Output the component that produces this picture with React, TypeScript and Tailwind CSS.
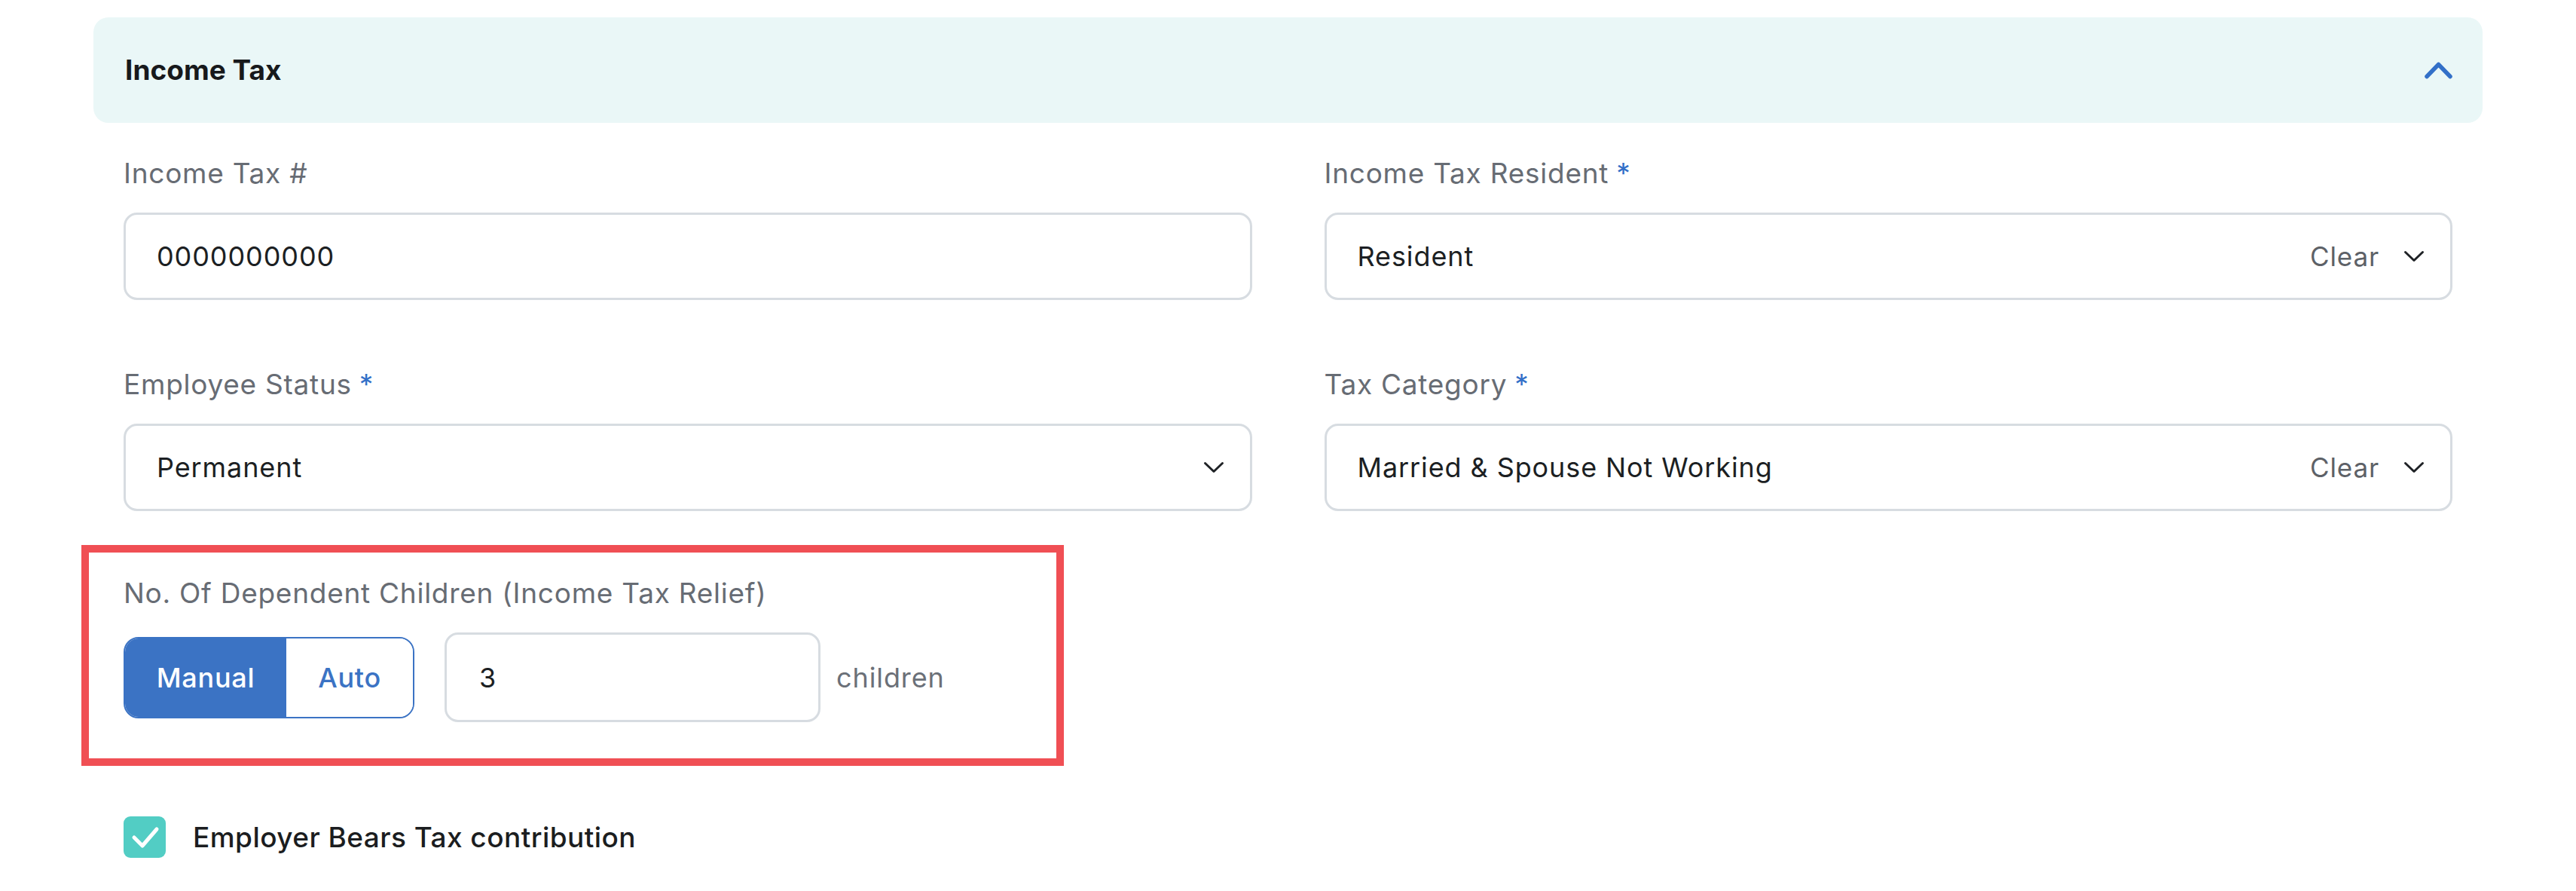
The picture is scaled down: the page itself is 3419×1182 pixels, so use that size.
import { useState } from "react";

type Option = { label: string; required?: boolean; value: string; kind: "text" | "select" | "clearable" };

const FIELDS: Option[] = [
  { label: "Income Tax #", value: "0000000000", kind: "text" },
  { label: "Income Tax Resident", required: true, value: "Resident", kind: "clearable" },
  { label: "Employee Status", required: true, value: "Permanent", kind: "select" },
  { label: "Tax Category", required: true, value: "Married & Spouse Not Working", kind: "clearable" },
];

function ChevronDown() {
  return (
    <svg width="28" height="16" viewBox="0 0 28 16" fill="none">
      <polyline points="2.5,2.5 14,13.5 25.5,2.5" stroke="#1f2226" strokeWidth="3" strokeLinecap="round" strokeLinejoin="round" />
    </svg>
  );
}

function Field({ f }: { f: Option }) {
  const [value, setValue] = useState(f.value);
  return (
    <div>
      <label className="block h-[44px] text-[37px] leading-[44px] tracking-[0.02em] text-[#676c74]">
        {f.label}
        {f.required && <span className="ml-[10px] text-[#3370c8]">*</span>}
      </label>
      <div className="mt-[30px] flex h-[116px] items-center rounded-[18px] border-[3px] border-[#d7dce1] bg-white pl-[41px] pr-[34px]">
        {f.kind === "text" ? (
          <input
            value={value}
            onChange={(e) => setValue(e.target.value)}
            className="w-full bg-transparent text-[36px] tracking-[0.025em] text-[#1c1f23] outline-none"
          />
        ) : (
          <>
            <span className="flex-1 text-[36px] tracking-[0.025em] text-[#1c1f23]">{value}</span>
            {f.kind === "clearable" && (
              <button onClick={() => setValue("")} className="mr-[32px] text-[35px] tracking-[0.025em] text-[#5d6167]">
                Clear
              </button>
            )}
            <ChevronDown />
          </>
        )}
      </div>
    </div>
  );
}

export default function App() {
  const [mode, setMode] = useState<"manual" | "auto">("manual");
  const [kids, setKids] = useState("3");
  const [bears, setBears] = useState(true);

  return (
    <div className="min-h-screen bg-white px-[124px] pt-[23px]" style={{ fontFamily: "Inter, 'Noto Sans', sans-serif" }}>
      <div className="flex h-[140px] items-center justify-between rounded-[20px] bg-[#eaf7f7] pl-[42px] pr-[40px]">
        <h2 className="text-[37px] font-bold text-[#17191c]">Income Tax</h2>
        <svg width="37" height="23" viewBox="0 0 37 23" fill="none">
          <polyline points="3,19.5 18.5,3.5 34,19.5" stroke="#3370c8" strokeWidth="5.5" strokeLinecap="round" strokeLinejoin="round" />
        </svg>
      </div>

      <div className="px-10">
        <div className="mt-[45px] grid grid-cols-2 gap-x-[96px] gap-y-[90px]">
          {FIELDS.map((f) => (
            <Field key={f.label} f={f} />
          ))}
        </div>

        {/* highlighted section */}
        <div className="-ml-[56px] mt-[45px] w-[1304px] border-[10px] border-[#f04f54] pb-[48px] pl-[46px] pt-[32px]">
          <div className="h-[44px] text-[37px] leading-[44px] tracking-[0.02em] text-[#676c74]">No. Of Dependent Children (Income Tax Relief)</div>
          <div className="mt-[30px] flex h-[119px] items-center">
            <div className="flex h-[108px] w-[386px] overflow-hidden rounded-[20px] border-2 border-[#3b73c4]">
              <button
                onClick={() => setMode("manual")}
                className={`w-[214px] text-[36px] font-medium tracking-[0.02em] ${mode === "manual" ? "bg-[#3b73c4] text-white" : "bg-white text-[#3b73c4]"}`}
              >
                Manual
              </button>
              <button
                onClick={() => setMode("auto")}
                className={`flex-1 text-[36px] font-medium tracking-[0.02em] ${mode === "auto" ? "bg-[#3b73c4] text-white" : "bg-white text-[#3b73c4]"}`}
              >
                Auto
              </button>
            </div>
            <input
              value={kids}
              onChange={(e) => setKids(e.target.value)}
              className="ml-[40px] h-[119px] w-[499px] rounded-[18px] border-[3px] border-[#d7dce1] px-[43px] text-[36px] text-[#1c1f23] outline-none"
            />
            <span className="ml-[21px] text-[36px] tracking-[0.025em] text-[#6b7078]">children</span>
          </div>
        </div>

        <label className="mt-[67px] flex cursor-pointer items-center gap-[36px]">
          <span
            onClick={() => setBears(!bears)}
            className={`flex h-[55px] w-[56px] items-center justify-center rounded-[9px] ${bears ? "bg-[#52cdc4]" : "border-[3px] border-[#d7dce1] bg-white"}`}
          >
            {bears && (
              <svg width="56" height="55" viewBox="0 0 56 55" fill="none">
                <polyline points="14,28 25,39 44,17" stroke="white" strokeWidth="5" strokeLinecap="round" strokeLinejoin="round" />
              </svg>
            )}
          </span>
          <span className="text-[37px] font-medium tracking-[0.012em] text-[#1b1d20]">Employer Bears Tax contribution</span>
        </label>
      </div>
    </div>
  );
}
